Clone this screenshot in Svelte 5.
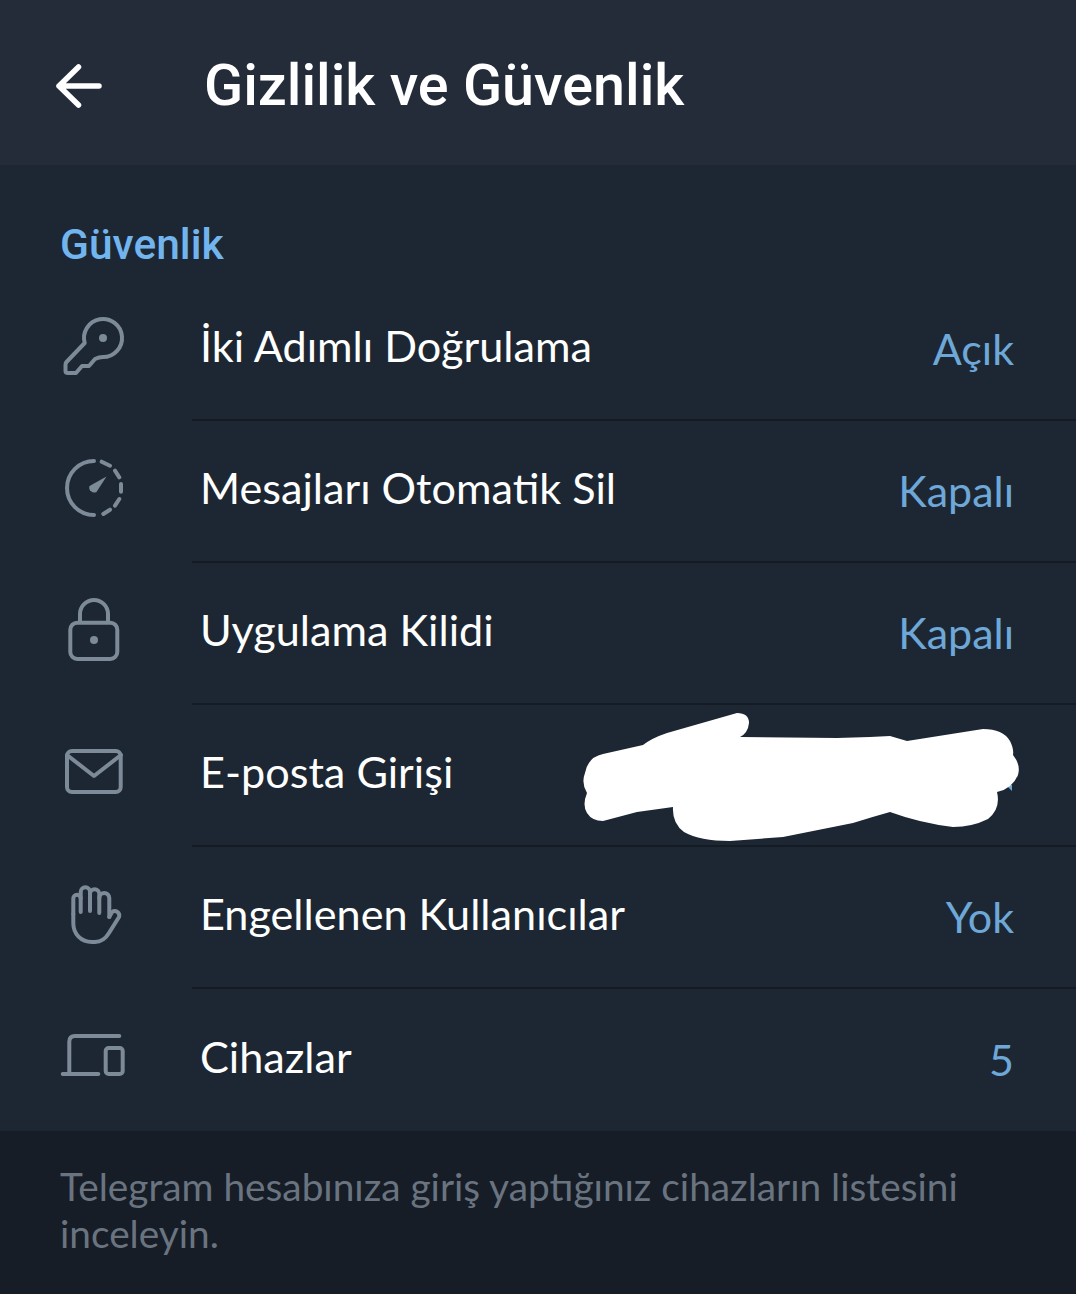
<script>
  const rows = [
    { icon: 'key', label: 'İki Adımlı Doğrulama', value: 'Açık' },
    { icon: 'timer', label: 'Mesajları Otomatik Sil', value: 'Kapalı' },
    { icon: 'lock', label: 'Uygulama Kilidi', value: 'Kapalı' },
    { icon: 'mail', label: 'E-posta Girişi', value: '', hidden: true },
    { icon: 'hand', label: 'Engellenen Kullanıcılar', value: 'Yok' },
    { icon: 'devices', label: 'Cihazlar', value: '5' }
  ];
</script>

{#snippet rowIcon(name)}
  <svg class="icon" viewBox="0 0 72 72" width="72" height="72" aria-hidden="true">
    {#if name === 'key'}
      <path d="M45 47A19 19 0 1 0 26.7 33L8.5 52Q7.5 53 7.5 55V61Q7.5 63 10 63H18L24 56H31L37 49Q41 47 45 47Z" />
      <circle class="dot" cx="45" cy="28" r="4" />
    {:else if name === 'timer'}
      <path d="M36 9A27 27 0 0 0 36 63" />
      <path d="M43.7 9.7L52 13.7M57 18.7L61.3 25.3M63 32V39.7M61.3 47L57 53.7M52 57.7L45.3 62" />
      <path class="dot" d="M48.5 24.5L38.5 40A5 5 0 0 1 31.5 34Z" />
    {:else if name === 'lock'}
      <rect x="12.3" y="28.7" width="47" height="36.3" rx="7" />
      <path d="M22 28V20A14 14 0 0 1 50 20V28" />
      <circle class="dot" cx="36" cy="46" r="4" />
    {:else if name === 'mail'}
      <rect x="9" y="15" width="53.7" height="41" rx="5" />
      <path d="M9 19L36 40L63 19" />
    {:else if name === 'hand'}
      <path d="M15.3 36V20.5A3.7 3.7 0 0 1 22.7 20.5V34" />
      <path d="M22.7 20.5V14A4.65 4.65 0 0 1 32 14V33" />
      <path d="M32 16A4.65 4.65 0 0 1 41.3 16V35" />
      <path d="M41.3 20A5 5 0 0 1 51.3 20V39" />
      <path d="M15.3 36V45C15.3 56 23 64 34 64H37C44 64 48 60 51 55L61 39A4.5 4.5 0 0 0 54 34L51.3 39" />
    {:else if name === 'devices'}
      <path d="M61.3 16H17Q11.3 16 11.3 21.7V53.3M4.7 54H40.3" />
      <rect x="47.7" y="28" width="17" height="26" rx="3" />
    {/if}
  </svg>
{/snippet}

<div class="screen">
  <header class="topbar">
    <svg class="back" viewBox="0 0 60 60" width="60" height="60" aria-hidden="true">
      <path d="M49 30H9M28.5 11L9 30L28.5 49" />
    </svg>
    <h1>Gizlilik ve Güvenlik</h1>
  </header>

  <section class="panel">
    <h2>Güvenlik</h2>
    {#each rows as row, i}
      <div class="row">
        <div class="icon-cell">{@render rowIcon(row.icon)}</div>
        <div class="row-main" class:last={i === rows.length - 1}>
          <span class="label">{row.label}</span>
          <span class="value">{row.value}</span>
        </div>
        {#if row.hidden}
          <!-- white scribble drawn over the e-mail address -->
          <svg class="scribble" viewBox="0 0 1076 142" width="1076" height="142" aria-hidden="true">
            <path class="peek" d="M1006 80L1012 80L1012 86Z" />
            <path d="M737 8Q749 8 749 18Q748 28 740 32L837 33L870 32L890 31L907 36L983 24Q1003 24 1010 36Q1014 44 1013 50Q1021 60 1018 70Q1012 84 997 87Q1001 104 988 114Q972 122 953 122Q920 118 890 107Q872 112 853 118L783 132L730 136Q700 136 684 127Q672 118 673 102L637 107L603 116Q592 116 587 108Q582 100 587 88Q581 78 585 68Q588 52 603 49L643 40Q652 33 667 28Z" />
          </svg>
        {/if}
      </div>
    {/each}
  </section>

  <footer class="hint">Telegram hesabınıza giriş yaptığınız cihazların listesini inceleyin.</footer>
</div>

<style>
  :global(body) {
    background: #161d27;
  }

  .screen {
    width: 1076px;
    height: 1294px;
    display: flex;
    flex-direction: column;
    overflow: hidden;
    font-family: Lato, "Open Sans", sans-serif;
  }

  .topbar {
    height: 165px;
    box-sizing: border-box;
    background: #232c38;
    display: flex;
    align-items: center;
    gap: 94px;
    padding: 6px 0 0 50px;
  }

  .back {
    flex: none;
    fill: none;
    stroke: #fff;
    stroke-width: 5.5;
    stroke-linecap: round;
    stroke-linejoin: round;
  }

  h1 {
    margin: 0;
    font-family: Roboto, sans-serif;
    font-weight: 500;
    font-size: 57.5px;
    color: #fff;
  }

  .panel {
    background: #1d2733;
  }

  h2 {
    margin: 0;
    height: 114px;
    box-sizing: border-box;
    padding: 56px 0 0 60px;
    font-family: Roboto, sans-serif;
    font-weight: 500;
    font-size: 42.5px;
    line-height: 48px;
    color: #72b5ee;
  }

  .row {
    position: relative;
    height: 142px;
    display: flex;
  }

  .icon-cell {
    width: 192px;
    flex: none;
    box-sizing: border-box;
    padding: 31px 0 0 58px;
  }

  .icon {
    display: block;
    fill: none;
    stroke: #7d8a98;
    stroke-width: 4;
    stroke-linecap: round;
    stroke-linejoin: round;
  }

  .icon .dot {
    fill: #7d8a98;
    stroke: none;
  }

  .row-main {
    flex: 1;
    display: flex;
    align-items: center;
    justify-content: space-between;
    box-sizing: border-box;
    padding: 0 62px 8px 8px;
    border-bottom: 2px solid #141b24;
  }

  .row-main.last {
    border-bottom: none;
  }

  .label {
    font-size: 43.2px;
    color: #fff;
  }

  .value {
    font-size: 43px;
    color: #6ea8d8;
    padding-top: 6px;
  }

  .scribble {
    position: absolute;
    left: 0;
    top: 0;
    fill: #fff;
  }

  .scribble .peek {
    fill: #6ea8d8;
  }

  .hint {
    flex: 1;
    box-sizing: border-box;
    padding: 32px 60px 0 60px;
    font-size: 38.8px;
    line-height: 47px;
    color: #6a7480;
  }
</style>
